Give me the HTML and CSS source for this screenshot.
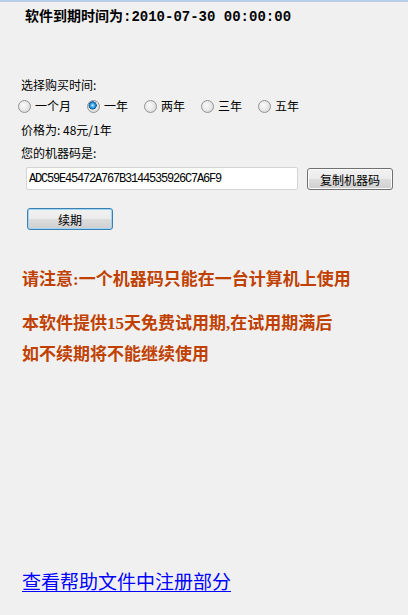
FILE: index.html
```html
<!DOCTYPE html>
<html lang="zh-CN">
<head>
    <meta charset="UTF-8">
    <meta name="viewport" content="width=device-width, initial-scale=1.0">
    <title>软件注册</title>
    <link rel="stylesheet" href="styles.css">
</head>
<body>
    <!-- 到期时间 -->
    <h1 class="expire">软件到期时间为:2010-07-30 00:00:00</h1>

    <!-- 购买 -->
    <div class="buy">
        <p class="line first">选择购买时间:</p>
        <div class="periods">
            <label class="period"><input type="radio" name="period"> 一个月</label>
            <label class="period"><input type="radio" name="period" checked> 一年</label>
            <label class="period"><input type="radio" name="period"> 两年</label>
            <label class="period"><input type="radio" name="period"> 三年</label>
            <label class="period"><input type="radio" name="period"> 五年</label>
        </div>
        <p class="line price">价格为: 48元/1年</p>
        <p class="line">您的机器码是:</p>
        <div class="code-row">
            <input class="code" type="text" value="ADC59E45472A767B3144535926C7A6F9" readonly>
            <button class="btn copy">复制机器码</button>
        </div>
        <button class="btn renew">续期</button>
    </div>

    <!-- 提示 -->
    <div class="notice">
        <p class="warn">请注意:一个机器码只能在一台计算机上使用</p>
        <p class="trial">本软件提供15天免费试用期,在试用期满后</p>
        <p class="trial">如不续期将不能继续使用</p>
    </div>

    <a class="help" href="#">查看帮助文件中注册部分</a>
</body>
</html>
```

FILE: styles.css
```css
body {
    margin: 0;
    border-top: 2px solid #b7cde8;
    background: #f0f0f0;
    font-family: "Noto Sans CJK SC", sans-serif;
    font-size: 12px;
    color: #000;
}
p {
    margin: 0;
}
.expire {
    margin: 7px 0 0 25px;
    font-family: "Liberation Mono", "Noto Sans CJK SC", monospace;
    font-size: 14px;
    line-height: 16px;
    font-weight: bold;
}
.buy {
    padding-left: 21px;
}
.line {
    line-height: 14px;
    margin-top: 9px;
}
.line.first {
    margin-top: 53px;
}
.line.price {
    margin-top: 10px;
}
.periods {
    display: flex;
    gap: 16px;
    margin: 7px 0 0 -3px;
    height: 14px;
}
.period {
    display: flex;
    align-items: center;
    gap: 4px;
    line-height: 14px;
}
.period input {
    appearance: none;
    margin: 0;
    width: 13px;
    height: 13px;
    border: 1px solid #939393;
    border-radius: 50%;
    background: radial-gradient(circle at 40% 40%, #fbfbfb 0, #e6e6e6 55%, #cdcdcd 100%);
}
.period input:checked {
    background:
        radial-gradient(circle at 42% 40%, #d4efff 0, #3aa6e4 22%, #0e5c9e 42%, rgba(14, 92, 158, 0) 48%),
        radial-gradient(circle at 40% 40%, #fbfbfb 0, #e6e6e6 55%, #cdcdcd 100%);
}
.code-row {
    display: flex;
    align-items: flex-start;
    gap: 9px;
    margin: 7px 0 0 5px;
}
.code {
    box-sizing: border-box;
    width: 272px;
    height: 23px;
    padding: 0 2px;
    border: 1px solid #d4d4d4;
    border-radius: 2px;
    background: #fff;
    font-family: "Liberation Mono", monospace;
    font-size: 12px;
    letter-spacing: -1.2px;
    color: #000;
    outline: none;
}
.btn {
    box-sizing: border-box;
    width: 86px;
    height: 22px;
    padding: 0;
    border: 1px solid #707070;
    border-radius: 3px;
    background: linear-gradient(#f2f2f2, #ebebeb 50%, #dddddd 50%, #cfcfcf);
    box-shadow: inset 0 0 0 1px #fcfcfc;
    font-family: "Noto Sans CJK SC", sans-serif;
    font-size: 12px;
    color: #000;
}
.copy {
    margin-top: 1px;
}
.renew {
    display: block;
    margin: 18px 0 0 6px;
    border-color: #3c7fb1;
    box-shadow: inset 0 0 0 1px #9fd6f5;
}
.notice {
    margin-top: 40px;
    padding-left: 22px;
    color: #c04000;
    font-family: "Liberation Serif", "Noto Sans CJK SC", serif;
    font-size: 17px;
    font-weight: bold;
    line-height: 20px;
}
.warn {
    margin-bottom: 24px;
}
.trial + .trial {
    margin-top: 11px;
}
.help {
    display: inline-block;
    margin: 205px 0 0 22px;
    color: #0000ff;
    font-size: 19px;
    line-height: 22px;
    text-underline-offset: 2px;
}
```
